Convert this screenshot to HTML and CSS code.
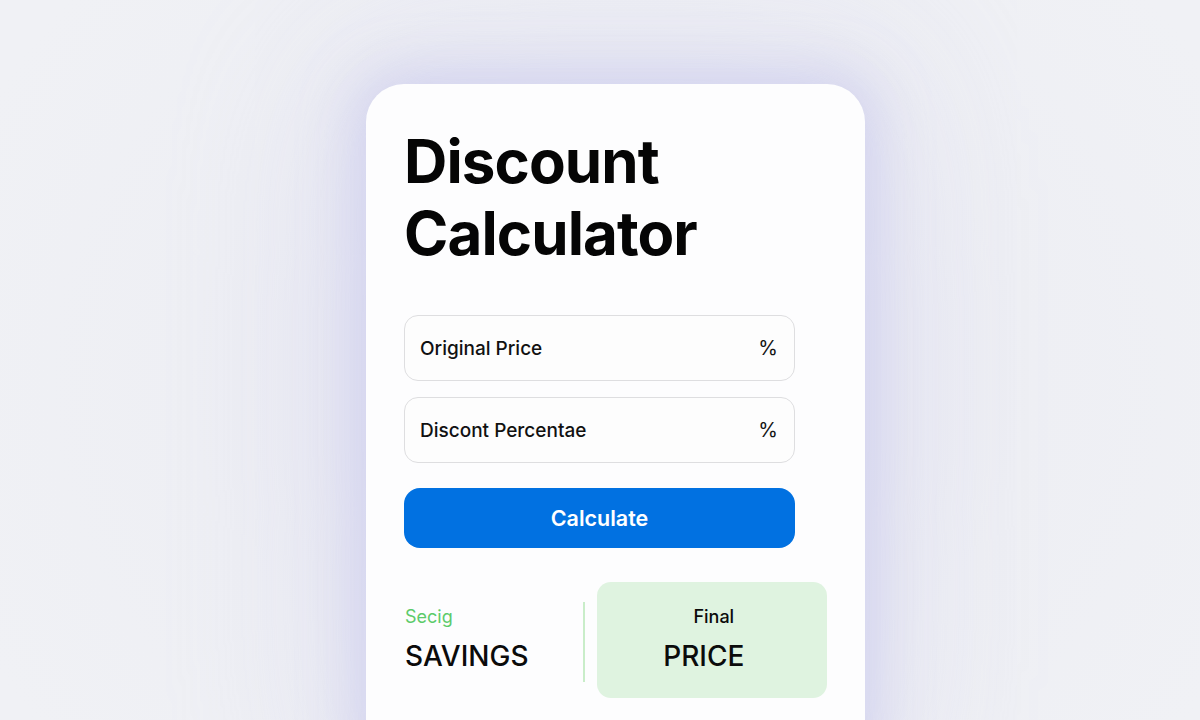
FILE: index.html
```html
<!DOCTYPE html>
<html lang="en">
<head>
<meta charset="utf-8">
<title>Discount Calculator</title>
<link rel="stylesheet" href="styles.css">
</head>
<body>
<div class="stage">
  <div class="card">
    <h1 class="title">Discount<br>Calculator</h1>
    <div class="field">
      <span class="field-label">Original Price</span>
      <span class="field-unit">%</span>
    </div>
    <div class="field">
      <span class="field-label">Discont Percentae</span>
      <span class="field-unit">%</span>
    </div>
    <button class="calc-btn" type="button">Calculate</button>
    <div class="results">
      <div class="savings">
        <span class="savings-label">Secig</span>
        <span class="savings-value">SAVINGS</span>
      </div>
      <div class="divider"></div>
      <div class="final">
        <span class="final-label">Final</span>
        <span class="final-value">PRICE</span>
      </div>
    </div>
  </div>
</div>
</body>
</html>
```
FILE: styles.css
```css
* { box-sizing: border-box; }
html, body {
  margin: 0;
  height: 100%;
}
body {
  background: radial-gradient(ellipse 700px 600px at 610px 380px, #e6e6f2 0%, #eeeff4 60%, #f0f1f5 100%);
  font-family: Inter, "Noto Sans", sans-serif;
  overflow: hidden;
  color: #0b0b0b;
}
.stage {
  padding: 84px 0 0 366px;
}
.card {
  width: 499px;
  height: 700px;
  background: #fdfdfe;
  border-radius: 38px;
  padding: 41px 38px 0 38px;
  box-shadow: 0 0 50px 12px rgba(198, 198, 236, 0.6), 0 0 160px 40px rgba(215, 215, 240, 0.45);
}
.title {
  margin: 0 0 46px 0;
  font-size: 60px;
  line-height: 72px;
  font-weight: 700;
  letter-spacing: -0.9px;
  color: #050505;
}
.field {
  width: 391px;
  height: 66px;
  border: 1.5px solid #dedee0;
  border-radius: 14px;
  display: flex;
  align-items: center;
  justify-content: space-between;
  padding: 0 16px 0 15px;
  margin-bottom: 16px;
  background: #fdfdfd;
}
.field-label {
  font-size: 19px;
  font-weight: 500;
  color: #111111;
}
.field-unit {
  font-size: 20px;
  font-weight: 400;
  color: #141414;
}
.calc-btn {
  display: block;
  width: 391px;
  height: 60px;
  margin-top: 25px;
  border: none;
  border-radius: 16px;
  background: #0171e1;
  color: #ffffff;
  font-family: inherit;
  font-size: 21.5px;
  font-weight: 600;
}
.results {
  display: flex;
  align-items: center;
  margin-top: 34px;
}
.savings {
  width: 179px;
  display: flex;
  flex-direction: column;
  gap: 12px;
  padding-left: 1px;
  margin-top: -2px;
}
.savings-label {
  font-size: 18px;
  color: #5ccb6a;
  line-height: 22px;
}
.savings-value {
  font-size: 28px;
  font-weight: 500;
  line-height: 32px;
  color: #0b0b0b;
}
.divider {
  width: 2px;
  height: 80px;
  background: #c9edc9;
  margin-right: 12px;
  margin-top: 4px;
}
.final {
  width: 231px;
  height: 116px;
  border-radius: 14px;
  background: #dff3e0;
  display: flex;
  flex-direction: column;
  align-items: center;
  justify-content: center;
  gap: 12px;
  padding-bottom: 3px;
}
.final-label {
  font-size: 18px;
  font-weight: 500;
  line-height: 22px;
  margin-left: 4px;
}
.final-value {
  font-size: 28px;
  font-weight: 500;
  line-height: 32px;
  margin-right: 16px;
}
```
